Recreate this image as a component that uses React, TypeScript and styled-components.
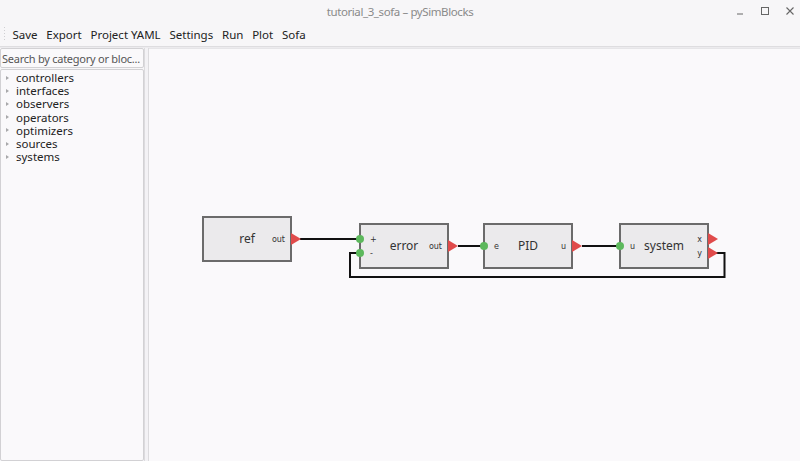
import React from 'react';
import styled, { createGlobalStyle } from 'styled-components';

const GlobalStyle = createGlobalStyle`
  html, body {
    margin: 0;
    padding: 0;
    background: #f7f6f8;
  }
  body {
    font-family: "Noto Sans", "Open Sans", sans-serif;
    color: #333;
  }
`;

const Window = styled.div`
  width: 800px;
  height: 461px;
  display: flex;
  flex-direction: column;
  overflow: hidden;
  background: #f7f6f8;
`;

const TitleBar = styled.div`
  height: 22px;
  display: flex;
  align-items: center;
  justify-content: center;
  position: relative;
  font-size: 11.5px;
  letter-spacing: -0.4px;
  color: #8a8a8a;
`;

const WinControls = styled.div`
  position: absolute;
  right: 0;
  top: 1px;
  height: 20px;
  display: flex;
  align-items: center;
  gap: 5px;
`;

const WinButton = styled.div`
  width: 20px;
  display: flex;
  justify-content: center;
  align-items: center;
  color: #666;
`;

const MenuBar = styled.div`
  height: 24px;
  display: flex;
  align-items: center;
  padding-left: 3px;
  border-bottom: 1px solid #dedde0;
  box-shadow: 0 1px 0 #ecebee;
  background: #f7f6f8;
`;

const Grip = styled.div`
  width: 3px;
  height: 16px;
  margin-right: 2px;
  background-image: radial-gradient(circle, #cfcfd2 0.7px, transparent 0.8px);
  background-size: 3px 3px;
`;

const MenuItem = styled.div`
  font-size: 11.5px;
  color: #222;
  padding: 0 4.4px;
  white-space: nowrap;
`;

const Body = styled.div`
  flex: 1;
  display: flex;
  min-height: 0;
  padding-top: 1px;
`;

const Sidebar = styled.div`
  width: 146px;
  display: flex;
  flex-direction: column;
  gap: 1px;
`;

const SearchBox = styled.div`
  height: 18px;
  border: 1px solid #d2d1d4;
  border-radius: 2px;
  background: #faf9fb;
  font-size: 11px;
  letter-spacing: -0.25px;
  color: #555;
  display: flex;
  align-items: center;
  padding-left: 1px;
  white-space: nowrap;
  overflow: hidden;
`;

const Tree = styled.div`
  flex: 1;
  border: 1px solid #d2d1d4;
  border-radius: 2px;
  background: #faf9fb;
  padding-top: 1px;
`;

const TreeRow = styled.div`
  height: 13.2px;
  line-height: 13.2px;
  display: flex;
  align-items: center;
  font-size: 11.5px;
  color: #222;
`;

const Arrow = styled.span`
  width: 0;
  height: 0;
  margin: 0 7px 0 5px;
  border-top: 2.5px solid transparent;
  border-bottom: 2.5px solid transparent;
  border-left: 3px solid #a8a8aa;
`;

const Splitter = styled.div`
  width: 3px;
  border-left: 1px solid #dcdbde;
  border-right: 1px solid #dcdbde;
  background: #f3f2f5;
`;

const Canvas = styled.div`
  flex: 1;
  background: #faf9fb;
  border-top: 1px solid #e6e5e8;
`;

const categories = [
  'controllers',
  'interfaces',
  'observers',
  'operators',
  'optimizers',
  'sources',
  'systems',
];

// diagram coords are page coords; viewBox shifts them to the canvas origin
const OX = 149;
const OY = 49;

type Port = { y: number; label: string };
type Block = { x: number; y: number; name: string; ins: Port[]; outs: Port[]; nameX: number };

const blocks: Block[] = [
  { x: 203, y: 217, name: 'ref', ins: [], outs: [{ y: 239, label: 'out' }], nameX: 247 },
  { x: 360, y: 224, name: 'error', ins: [{ y: 239, label: '+' }, { y: 253, label: '-' }], outs: [{ y: 246, label: 'out' }], nameX: 404 },
  { x: 484, y: 224, name: 'PID', ins: [{ y: 246, label: 'e' }], outs: [{ y: 246, label: 'u' }], nameX: 528 },
  { x: 620, y: 224, name: 'system', ins: [{ y: 246, label: 'u' }], outs: [{ y: 239, label: 'x' }, { y: 253, label: 'y' }], nameX: 664 },
];

function Diagram() {
  const W = 88;
  const H = 44;
  return (
    <svg width={651} height={412} viewBox={`${OX} ${OY} 651 412`} style={{ display: 'block' }}>
      <g stroke="#111" strokeWidth={2} fill="none">
        <line x1={300} y1={239} x2={360} y2={239} />
        <line x1={458} y1={246} x2={484} y2={246} />
        <line x1={582} y1={246} x2={620} y2={246} />
        <polyline points="716,253 724.5,253 724.5,277 350,277 350,253 360,253" />
      </g>
      {blocks.map((b) => (
        <g key={b.name}>
          <rect x={b.x} y={b.y} width={W} height={H} fill="#ebeaec" stroke="#6b6b6b" strokeWidth={2} />
          <text x={b.nameX} y={b.y + 26} textAnchor="middle" fontSize={12} fill="#333" fontFamily="Noto Sans, sans-serif">
            {b.name}
          </text>
          {b.ins.map((p) => (
            <g key={p.label}>
              <circle cx={b.x} cy={p.y} r={4} fill="#5cb85c" />
              <text x={b.x + 10} y={p.y + 3} fontSize={8} fill="#333" fontFamily="DejaVu Sans, sans-serif">
                {p.label}
              </text>
            </g>
          ))}
          {b.outs.map((p) => (
            <g key={p.label}>
              <polygon points={`${b.x + W},${p.y - 6} ${b.x + W + 10},${p.y} ${b.x + W},${p.y + 6}`} fill="#e04b4b" />
              <text x={b.x + W - 6} y={p.y + 3} textAnchor="end" fontSize={8} fill="#333" fontFamily="DejaVu Sans, sans-serif">
                {p.label}
              </text>
            </g>
          ))}
        </g>
      ))}
    </svg>
  );
}

export default function App() {
  return (
    <Window>
      <GlobalStyle />
      <TitleBar>
        tutorial_3_sofa – pySimBlocks
        <WinControls>
          <WinButton>
            <svg width="10" height="10"><line x1="2" y1="8" x2="8" y2="8" stroke="#666" strokeWidth="1" /></svg>
          </WinButton>
          <WinButton>
            <svg width="10" height="10"><rect x="1.5" y="1.5" width="7" height="7" fill="none" stroke="#666" strokeWidth="1" /></svg>
          </WinButton>
          <WinButton>
            <svg width="10" height="10"><path d="M1.5 1.5 L8.5 8.5 M8.5 1.5 L1.5 8.5" stroke="#666" strokeWidth="1.1" /></svg>
          </WinButton>
        </WinControls>
      </TitleBar>
      <MenuBar>
        <Grip />
        {['Save', 'Export', 'Project YAML', 'Settings', 'Run', 'Plot', 'Sofa'].map((m) => (
          <MenuItem key={m}>{m}</MenuItem>
        ))}
      </MenuBar>
      <Body>
        <Sidebar>
          <SearchBox>Search by category or bloc...</SearchBox>
          <Tree>
            {categories.map((c) => (
              <TreeRow key={c}>
                <Arrow />
                {c}
              </TreeRow>
            ))}
          </Tree>
        </Sidebar>
        <Splitter />
        <Canvas>
          <Diagram />
        </Canvas>
      </Body>
    </Window>
  );
}
